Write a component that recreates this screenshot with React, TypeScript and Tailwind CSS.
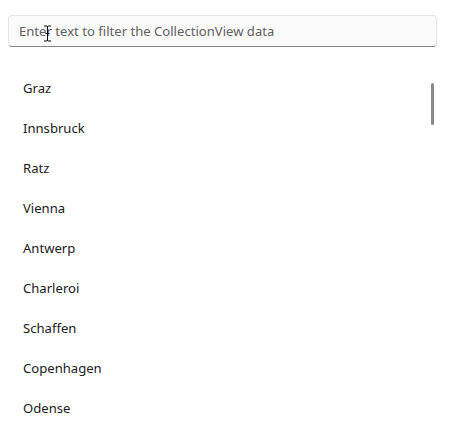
import React from "react";

const cities = ["Graz", "Innsbruck", "Ratz", "Vienna", "Antwerp", "Charleroi", "Schaffen", "Copenhagen", "Odense"];

export default function App() {
  return (
    <div className="w-[452px] h-[437px] bg-white overflow-hidden relative" style={{ fontFamily: '"Segoe UI", "Noto Sans", sans-serif' }}>
      <div className="pt-[15px] pl-[8px] pr-[15px]">
        <div className="h-[32px] rounded-[4px] border border-[#e5e5e5] border-b-[#868686] bg-[#fbfbfb] flex items-center pl-[10px] pt-[1px]">
          <span className="text-[13.1px] text-[#5f5f5f] leading-none">Enter text to filter the CollectionView data</span>
        </div>
      </div>
      <div className="flex mt-[22px]">
        <div className="flex-1 flex flex-col">
          {cities.map((c) => (
            <div key={c} className="h-[40px] flex items-center pl-[23px] text-[13.1px] text-[#1b1b1b]">
              {c}
            </div>
          ))}
        </div>
      </div>
      <div className="absolute left-[431px] top-[83px] w-[3px] h-[42px] rounded-full bg-[#8a8a8a]" />
      <svg className="absolute left-[43px] top-[25px]" width="9" height="17" viewBox="0 0 9 17">
        <path d="M1 1 H3.5 Q4.5 1 4.5 2 V15 Q4.5 16 3.5 16 H1 M8 1 H5.5 Q4.5 1 4.5 2 M4.5 15 Q4.5 16 5.5 16 H8 M2.5 8.5 H6.5" fill="none" stroke="#000" strokeWidth="1" />
      </svg>
    </div>
  );
}
